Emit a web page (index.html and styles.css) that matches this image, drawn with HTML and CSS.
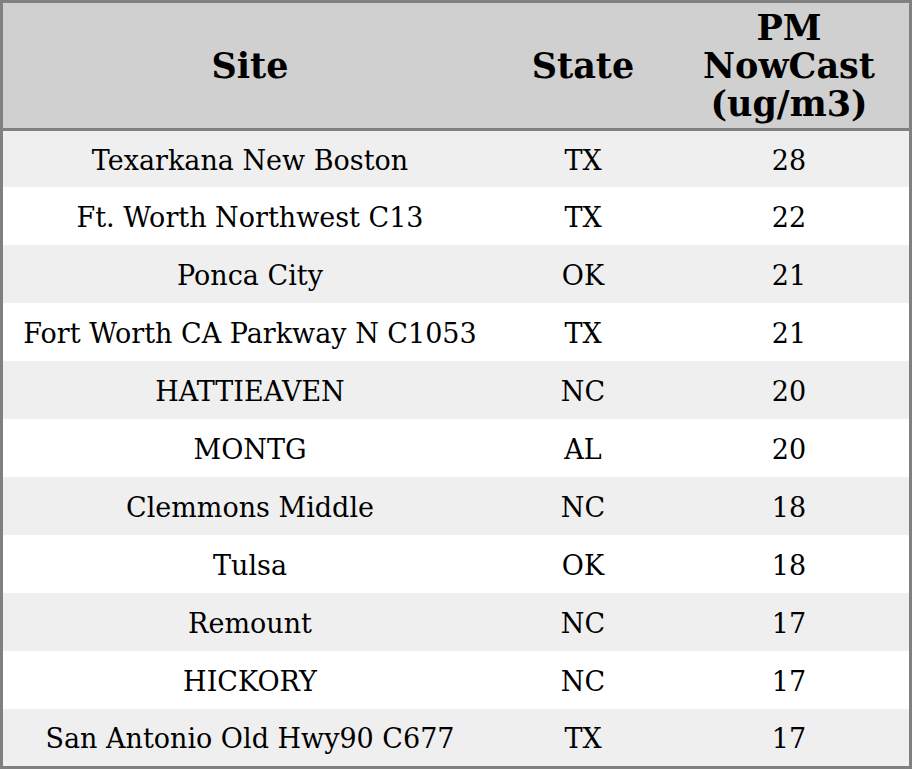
FILE: index.html
```html
<!DOCTYPE html>
<html>
<head>
<meta charset="utf-8">
<link rel="stylesheet" href="styles.css">
</head>
<body>
<table class="aq-table">
  <thead>
    <tr>
      <th class="col-site">Site</th>
      <th class="col-state">State</th>
      <th class="col-pm">PM<br>NowCast<br>(ug/m3)</th>
    </tr>
  </thead>
  <tbody>
    <tr><td>Texarkana New Boston</td><td>TX</td><td>28</td></tr>
    <tr><td>Ft. Worth Northwest C13</td><td>TX</td><td>22</td></tr>
    <tr><td>Ponca City</td><td>OK</td><td>21</td></tr>
    <tr><td>Fort Worth CA Parkway N C1053</td><td>TX</td><td>21</td></tr>
    <tr><td>HATTIEAVEN</td><td>NC</td><td>20</td></tr>
    <tr><td>MONTG</td><td>AL</td><td>20</td></tr>
    <tr><td>Clemmons Middle</td><td>NC</td><td>18</td></tr>
    <tr><td>Tulsa</td><td>OK</td><td>18</td></tr>
    <tr><td>Remount</td><td>NC</td><td>17</td></tr>
    <tr><td>HICKORY</td><td>NC</td><td>17</td></tr>
    <tr><td>San Antonio Old Hwy90 C677</td><td>TX</td><td>17</td></tr>
  </tbody>
</table>
</body>
</html>
```
FILE: styles.css
```css
html, body {
  margin: 0;
  padding: 0;
  background: #ffffff;
}
.aq-table {
  width: 912px;
  height: 769px;
  border-collapse: separate;
  border-spacing: 0;
  border: 3px solid #808080;
  box-sizing: border-box;
  table-layout: fixed;
  font-family: "DejaVu Serif", serif;
  color: #000;
}
.aq-table th {
  background: #d0d0d0;
  font-size: 35px;
  font-weight: bold;
  line-height: 38px;
  height: 125px;
  padding: 0;
  border-bottom: 3px solid #808080;
  text-align: center;
  vertical-align: middle;
}
.col-site { width: 494px; }
.col-state { width: 172px; }
.col-pm { width: 240px; }
.aq-table td {
  box-sizing: border-box;
  font-size: 27px;
  height: 58px;
  padding: 2px 0 0;
  text-align: center;
  vertical-align: middle;
}
.aq-table tbody tr:first-child td {
  height: 56px;
}
.aq-table tbody tr:last-child td {
  height: 57px;
}
.aq-table tbody tr:nth-child(odd) td {
  background: #efefef;
}
.aq-table tbody tr:nth-child(even) td {
  background: #ffffff;
}
```
